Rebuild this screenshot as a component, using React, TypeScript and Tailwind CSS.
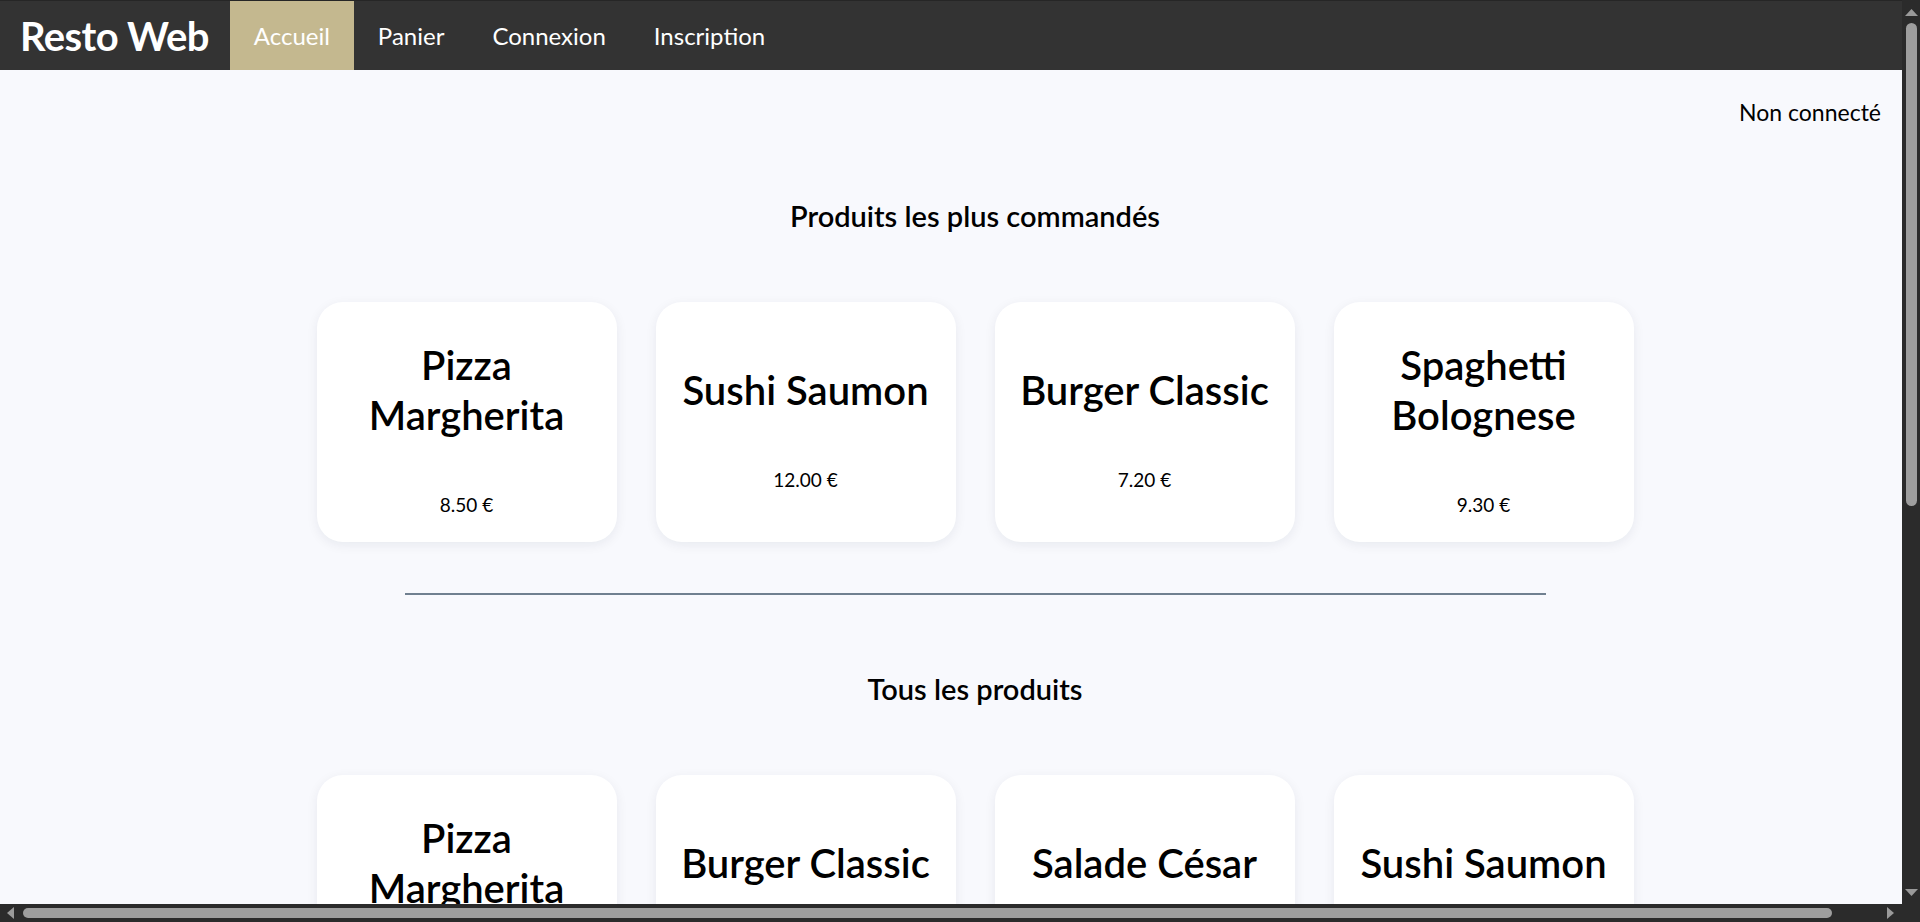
import React from "react";

type Product = { name: string; price: string };

const popular: Product[] = [
  { name: "Pizza Margherita", price: "8.50 €" },
  { name: "Sushi Saumon", price: "12.00 €" },
  { name: "Burger Classic", price: "7.20 €" },
  { name: "Spaghetti Bolognese", price: "9.30 €" },
];

const allProducts: Product[] = [
  { name: "Pizza Margherita", price: "8.50 €" },
  { name: "Burger Classic", price: "7.20 €" },
  { name: "Salade César", price: "6.80 €" },
  { name: "Sushi Saumon", price: "12.00 €" },
  { name: "Spaghetti Bolognese", price: "9.30 €" },
  { name: "Tiramisu", price: "4.50 €" },
  { name: "Coca-Cola", price: "2.00 €" },
  { name: "Eau minérale", price: "1.50 €" },
];

const links = ["Accueil", "Panier", "Connexion", "Inscription"];

function ProductCard({ product }: { product: Product }) {
  return (
    <div className="flex w-[300px] flex-col justify-center rounded-[26px] bg-white px-5 pt-[38px] pb-[25px] text-center shadow-[0_3px_12px_rgba(20,30,60,0.07)]">
      <h3 className="text-[40px] font-semibold leading-[50px] text-black">{product.name}</h3>
      <p className="mt-[53px] text-[19px] leading-[24px] text-black">{product.price}</p>
    </div>
  );
}

function Section({ title, products }: { title: string; products: Product[] }) {
  return (
    <section className="flex flex-col items-center">
      <h2 className="text-[29px] font-semibold leading-[36px] text-black">{title}</h2>
      <div className="mt-[68px] grid grid-cols-[repeat(4,300px)] gap-x-[39px] gap-y-[40px]">
        {products.map((p, i) => (
          <ProductCard key={i} product={p} />
        ))}
      </div>
    </section>
  );
}

// window scrollbars as in the screenshot (dark theme)
function VScrollbar() {
  return (
    <div className="flex w-[18px] flex-col items-center bg-[#2b2b2b] pt-[9px] pb-[8px]">
      <svg width="13" height="7" viewBox="0 0 13 7">
        <polygon points="6.5,0 13,7 0,7" fill="#9a9a9a" />
      </svg>
      <div className="mt-[7px] h-[483px] w-[11px] rounded-full bg-[#9e9e9e]" />
      <div className="flex-1" />
      <svg width="13" height="7" viewBox="0 0 13 7">
        <polygon points="0,0 13,0 6.5,7" fill="#9a9a9a" />
      </svg>
    </div>
  );
}

function HScrollbar() {
  return (
    <div className="flex h-[18px] flex-1 items-center bg-[#2b2b2b] pl-[7px] pr-[8px]">
      <svg width="7" height="12" viewBox="0 0 7 12">
        <polygon points="7,0 7,12 0,6" fill="#9a9a9a" />
      </svg>
      <div className="ml-[9px] h-[10px] w-[1809px] rounded-full bg-[#9e9e9e]" />
      <div className="flex-1" />
      <svg width="7" height="12" viewBox="0 0 7 12">
        <polygon points="0,0 7,6 0,12" fill="#9a9a9a" />
      </svg>
    </div>
  );
}

export default function App() {
  return (
    <div
      className="flex h-screen w-screen flex-col overflow-hidden bg-[#f8f9fd]"
      style={{ fontFamily: "Lato, 'Noto Sans', sans-serif" }}
    >
      <div className="flex min-h-0 flex-1">
        <div className="min-w-0 flex-1 overflow-hidden">
          <header className="flex h-[70px] w-full items-stretch border-t border-[#262626] bg-[#333333]">
            <div className="flex items-center pl-[20px] pr-[21px] text-[40px] font-bold tracking-[-0.6px] text-white">
              Resto Web
            </div>
            <nav className="flex items-stretch">
              {links.map((l, i) => (
                <a
                  key={l}
                  className={`flex items-center px-6 text-[24px] text-white ${i === 0 ? "bg-[#c4b88f]" : ""}`}
                >
                  {l}
                </a>
              ))}
            </nav>
          </header>

          <div className="flex w-full justify-end pr-[21px] pt-[28px]">
            <span className="text-[23px] leading-[28px] text-black">Non connecté</span>
          </div>

          <main className="w-[1950px] pt-[72px] pb-[250px]">
            <Section title="Produits les plus commandés" products={popular} />
            <div className="mx-auto mt-[51px] mb-[76px] h-[2px] w-[1141px] bg-[#708090]" />
            <Section title="Tous les produits" products={allProducts} />
          </main>
        </div>
        <VScrollbar />
      </div>
      <div className="flex">
        <HScrollbar />
        <div className="h-[18px] w-[18px] bg-[#2b2b2b]" />
      </div>
    </div>
  );
}
